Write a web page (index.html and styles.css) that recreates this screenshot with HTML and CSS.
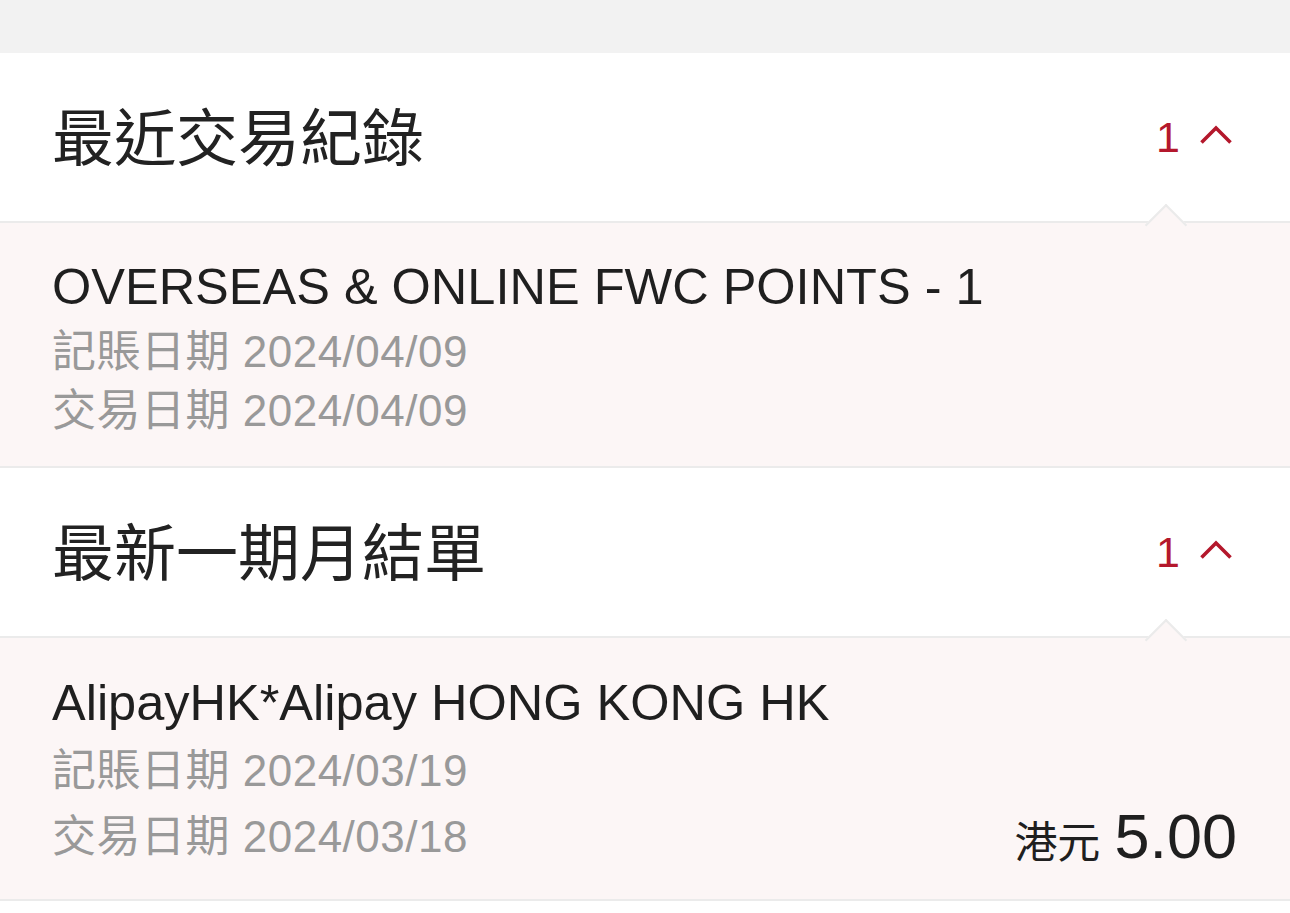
FILE: index.html
```html
<!DOCTYPE html>
<html lang="zh-Hant">
<head>
<meta charset="utf-8">
<title>交易紀錄</title>
<link rel="stylesheet" href="styles.css">
</head>
<body>
<div class="topbar"></div>

<section class="group">
  <header class="group-head">
    <h2 class="group-title">最近交易紀錄</h2>
    <div class="group-count">
      <span class="count-num">1</span>
      <svg class="chev" width="34" height="20" viewBox="0 0 34 20"><polyline points="2.5,17.5 17,3 31.5,17.5" fill="none" stroke="#b4182c" stroke-width="3.6" stroke-linecap="butt" stroke-linejoin="miter"/></svg>
    </div>
  </header>
  <div class="panel">
    <div class="txn">
      <div class="txn-name">OVERSEAS &amp; ONLINE FWC POINTS - 1</div>
      <div class="txn-meta">
        <div class="meta-line">記賬日期 2024/04/09</div>
        <div class="meta-line">交易日期 2024/04/09</div>
      </div>
    </div>
  </div>
</section>

<section class="group">
  <header class="group-head">
    <h2 class="group-title">最新一期月結單</h2>
    <div class="group-count">
      <span class="count-num">1</span>
      <svg class="chev" width="34" height="20" viewBox="0 0 34 20"><polyline points="2.5,17.5 17,3 31.5,17.5" fill="none" stroke="#b4182c" stroke-width="3.6" stroke-linecap="butt" stroke-linejoin="miter"/></svg>
    </div>
  </header>
  <div class="panel panel--amount">
    <div class="txn">
      <div class="txn-name">AlipayHK*Alipay HONG KONG HK</div>
      <div class="txn-meta">
        <div class="meta-line">記賬日期 2024/03/19</div>
        <div class="meta-row">
          <div class="meta-line">交易日期 2024/03/18</div>
          <div class="amount"><span class="currency">港元</span><span class="value">5.00</span></div>
        </div>
      </div>
    </div>
  </div>
</section>
</body>
</html>
```

FILE: styles.css
```css
* { box-sizing: border-box; }

html, body {
  margin: 0;
  padding: 0;
  background: #ffffff;
  font-family: "Liberation Sans", "Noto Sans CJK TC", sans-serif;
  color: #222222;
}

.topbar {
  height: 53px;
  background: #f2f2f2;
}

.group-head {
  height: 168px;
  display: flex;
  align-items: center;
  justify-content: space-between;
  padding: 0 57px 0 52px;
  background: #ffffff;
}

.group-title {
  margin: 0;
  padding-top: 6px;
  font-weight: normal;
  font-size: 62px;
  line-height: 70px;
  color: #222222;
}

.group-count {
  display: flex;
  align-items: center;
  gap: 19px;
}

.count-num {
  font-size: 43px;
  line-height: 50px;
  color: #b4182c;
}

.chev {
  display: block;
  margin-top: -4px;
}

.panel {
  position: relative;
  background: #fcf6f6;
  border-top: 2px solid #ebebeb;
  border-bottom: 2px solid #ebebeb;
  padding: 33px 53px 26px 52px;
}

.panel::before {
  content: "";
  position: absolute;
  right: 109px;
  top: -13px;
  width: 28px;
  height: 28px;
  background: #fcf6f6;
  border-top: 2px solid #ebebeb;
  border-left: 2px solid #ebebeb;
  transform: rotate(45deg);
}

.txn-name {
  font-size: 50.5px;
  line-height: 62px;
  color: #1f1f1f;
}

.txn-meta {
  margin-top: 4px;
}

.meta-line {
  font-size: 44px;
  line-height: 59px;
  letter-spacing: 0.5px;
  color: #999999;
}

.panel--amount {
  padding-top: 34px;
  padding-bottom: 33px;
}

.panel--amount .txn-meta {
  margin-top: 7px;
}

.meta-row {
  display: flex;
  justify-content: space-between;
  align-items: flex-end;
  margin-top: 6px;
}

.amount {
  font-size: 63px;
  line-height: 60px;
  color: #1f1f1f;
}

.currency {
  font-size: 43px;
  line-height: 1;
  margin-right: 14px;
}

.value {
  font-size: 63px;
}
```
